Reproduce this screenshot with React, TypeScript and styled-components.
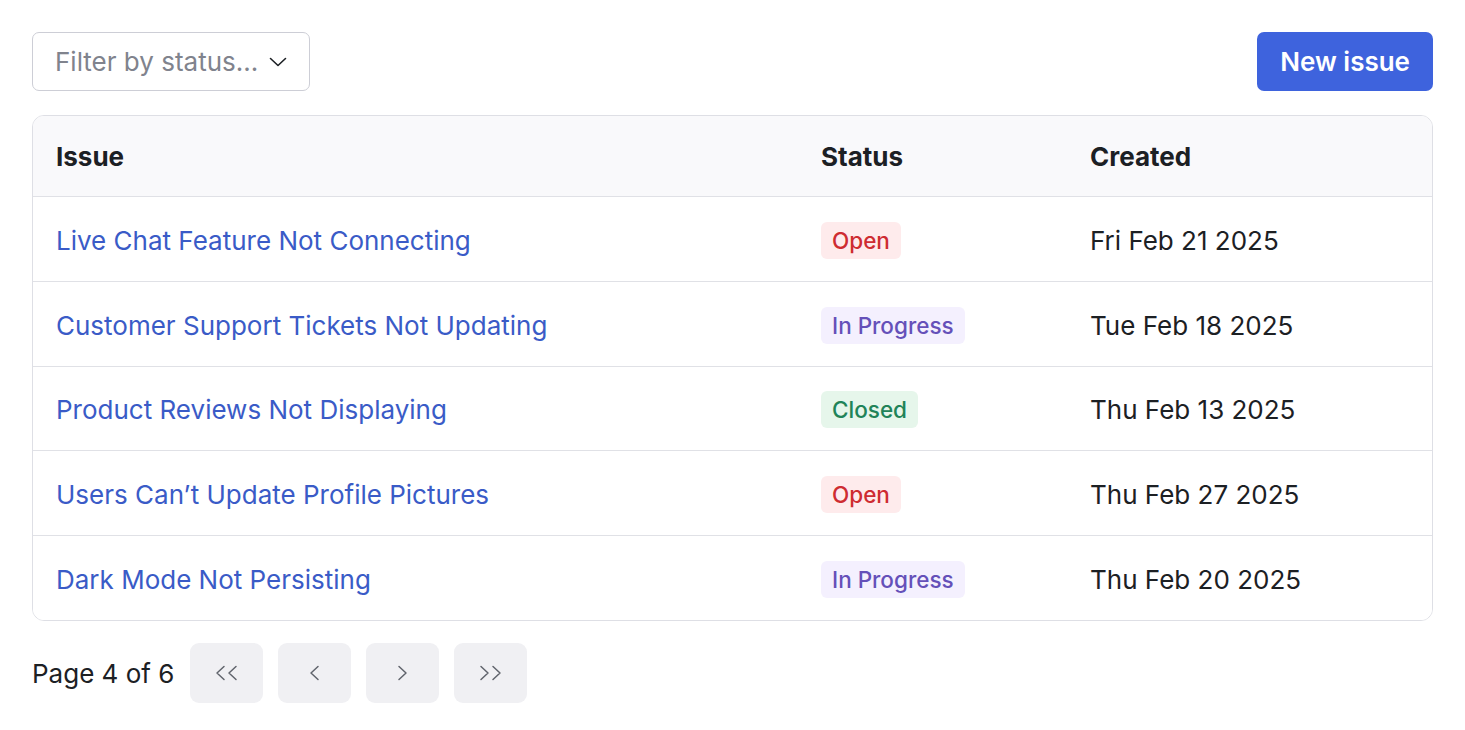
import React from "react";
import styled, { createGlobalStyle } from "styled-components";

const GlobalStyle = createGlobalStyle`
  html, body { margin: 0; padding: 0; background: #ffffff; }
  body { font-family: Inter, "Noto Sans", sans-serif; color: #1c2024; -webkit-font-smoothing: antialiased; }
  * { box-sizing: border-box; }
`;

const Page = styled.div`
  padding: 32px;
  display: flex;
  flex-direction: column;
`;

const Toolbar = styled.div`
  display: flex;
  justify-content: space-between;
  align-items: center;
  margin-bottom: 24px;
`;

const SelectTrigger = styled.button`
  height: 59px;
  display: flex;
  align-items: center;
  gap: 11px;
  padding: 0 22px;
  background: #ffffff;
  border: 1px solid #cdced6;
  border-radius: 7px;
  font-family: inherit;
  font-size: 26px;
  color: #80838d;
  cursor: pointer;
`;

const PrimaryButton = styled.button`
  height: 59px;
  padding: 0 23px;
  background: #3e63dd;
  color: #ffffff;
  border: none;
  border-radius: 7px;
  font-family: inherit;
  font-size: 26px;
  font-weight: 600;
  cursor: pointer;
`;

const TableBox = styled.div`
  border: 1px solid #dedfe5;
  border-radius: 12px;
  overflow: hidden;
`;

const Row = styled.div<{ $header?: boolean }>`
  display: grid;
  grid-template-columns: 765px 269px 1fr;
  align-items: center;
  height: ${(p) => (p.$header ? "80px" : "84.8px")};
  padding-top: ${(p) => (p.$header ? "0" : "3px")};
  background: ${(p) => (p.$header ? "#f9f9fb" : "#ffffff")};
  border-top: ${(p) => (p.$header ? "none" : "1px solid #e0e1e6")};
`;

const HeadCell = styled.div`
  padding: 0 23px;
  font-size: 26px;
  font-weight: 700;
  color: #1c2024;
`;

const Cell = styled.div`
  padding: 0 23px;
  font-size: 26px;
  color: #1c2024;
`;

const IssueLink = styled.a`
  color: #3a5bc7;
  text-decoration: none;
  font-size: 26px;
`;

const badgeColors: Record<string, { bg: string; fg: string }> = {
  OPEN: { bg: "#feebec", fg: "#ce2c31" },
  IN_PROGRESS: { bg: "#f4f0fe", fg: "#6550b9" },
  CLOSED: { bg: "#e6f6eb", fg: "#218358" },
};

const Badge = styled.span<{ $status: string }>`
  display: inline-flex;
  align-items: center;
  height: 37px;
  padding: 0 11px;
  border-radius: 6px;
  font-size: 22.5px;
  font-weight: 500;
  background: ${(p) => badgeColors[p.$status].bg};
  color: ${(p) => badgeColors[p.$status].fg};
`;

const Pagination = styled.div`
  display: flex;
  align-items: center;
  gap: 15px;
  margin-top: 22px;
`;

const PageText = styled.span`
  font-size: 26px;
  color: #1c2024;
  margin-right: 1px;
  padding-top: 2px;
`;

const PageButton = styled.button`
  width: 73px;
  height: 60px;
  display: flex;
  align-items: center;
  justify-content: center;
  background: #f0f0f3;
  border: none;
  border-radius: 9px;
  color: #60646c;
  cursor: pointer;
  padding: 0;
`;

const Chevron = ({ dir }: { dir: "left" | "right" }) => (
  <svg width="11" height="16" viewBox="0 0 11 16" fill="none">
    <path
      d={dir === "left" ? "M9 1.5 L2 8 L9 14.5" : "M2 1.5 L9 8 L2 14.5"}
      stroke="currentColor"
      strokeWidth="1.5"
      strokeLinecap="round"
      strokeLinejoin="round"
    />
  </svg>
);

const DoubleChevron = ({ dir }: { dir: "left" | "right" }) => (
  <svg width="23" height="16" viewBox="0 0 23 16" fill="none">
    <path
      d={
        dir === "left"
          ? "M9 1.5 L2 8 L9 14.5 M21 1.5 L14 8 L21 14.5"
          : "M2 1.5 L9 8 L2 14.5 M14 1.5 L21 8 L14 14.5"
      }
      stroke="currentColor"
      strokeWidth="1.5"
      strokeLinecap="round"
      strokeLinejoin="round"
    />
  </svg>
);

const SelectChevron = () => (
  <svg width="18" height="10" viewBox="0 0 18 10" fill="none">
    <path d="M1.5 1.5 L9 8.5 L16.5 1.5" stroke="#1c2024" strokeWidth="1.6" strokeLinecap="round" strokeLinejoin="round" />
  </svg>
);

const issues = [
  { title: "Live Chat Feature Not Connecting", status: "OPEN", label: "Open", date: "Fri Feb 21 2025" },
  { title: "Customer Support Tickets Not Updating", status: "IN_PROGRESS", label: "In Progress", date: "Tue Feb 18 2025" },
  { title: "Product Reviews Not Displaying", status: "CLOSED", label: "Closed", date: "Thu Feb 13 2025" },
  { title: "Users Can’t Update Profile Pictures", status: "OPEN", label: "Open", date: "Thu Feb 27 2025" },
  { title: "Dark Mode Not Persisting", status: "IN_PROGRESS", label: "In Progress", date: "Thu Feb 20 2025" },
];

export default function App() {
  return (
    <>
      <GlobalStyle />
      <Page>
        <Toolbar>
          <SelectTrigger>
            <span>Filter by status...</span>
            <SelectChevron />
          </SelectTrigger>
          <PrimaryButton>New issue</PrimaryButton>
        </Toolbar>
        <TableBox>
          <Row $header>
            <HeadCell>Issue</HeadCell>
            <HeadCell>Status</HeadCell>
            <HeadCell>Created</HeadCell>
          </Row>
          {issues.map((i) => (
            <Row key={i.title}>
              <Cell>
                <IssueLink href="#">{i.title}</IssueLink>
              </Cell>
              <Cell>
                <Badge $status={i.status}>{i.label}</Badge>
              </Cell>
              <Cell>{i.date}</Cell>
            </Row>
          ))}
        </TableBox>
        <Pagination>
          <PageText>Page 4 of 6</PageText>
          <PageButton><DoubleChevron dir="left" /></PageButton>
          <PageButton><Chevron dir="left" /></PageButton>
          <PageButton><Chevron dir="right" /></PageButton>
          <PageButton><DoubleChevron dir="right" /></PageButton>
        </Pagination>
      </Page>
    </>
  );
}
